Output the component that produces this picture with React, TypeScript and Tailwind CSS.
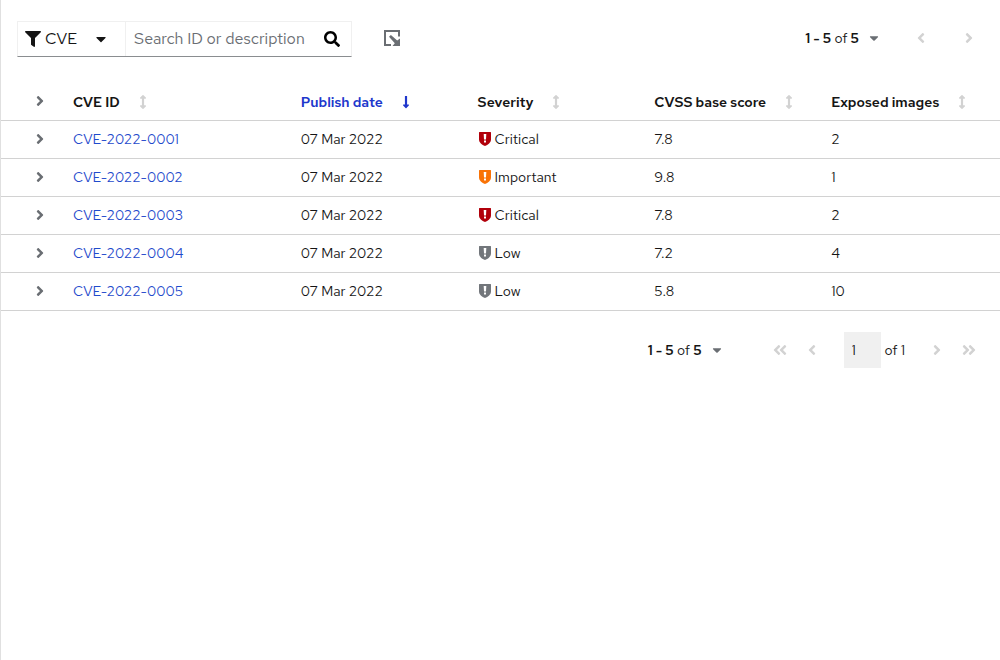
import type { ReactNode } from "react";
import {
  FaAngleDoubleLeft,
  FaAngleDoubleRight,
  FaAngleLeft,
  FaAngleRight,
  FaArrowsAltV,
  FaCaretDown,
  FaFilter,
  FaLongArrowAltDown,
  FaSearch,
} from "react-icons/fa";

type Severity = "Critical" | "Important" | "Low";

const rows: { id: string; date: string; severity: Severity; score: string; images: number }[] = [
  { id: "CVE-2022-0001", date: "07 Mar 2022", severity: "Critical", score: "7.8", images: 2 },
  { id: "CVE-2022-0002", date: "07 Mar 2022", severity: "Important", score: "9.8", images: 1 },
  { id: "CVE-2022-0003", date: "07 Mar 2022", severity: "Critical", score: "7.8", images: 2 },
  { id: "CVE-2022-0004", date: "07 Mar 2022", severity: "Low", score: "7.2", images: 4 },
  { id: "CVE-2022-0005", date: "07 Mar 2022", severity: "Low", score: "5.8", images: 10 },
];

const severityColor: Record<Severity, string> = {
  Critical: "text-[#b1000b]",
  Important: "text-[#f97306]",
  Low: "text-[#72767b]",
};

function ShieldIcon({ className }: { className: string }) {
  return (
    <svg viewBox="0 0 12 14" className={`h-[14px] w-3 ${className}`} fill="currentColor" aria-hidden="true">
      <path
        fillRule="evenodd"
        d="M0 .4Q0 0 .4 0h11.200Q12 0 12 .4V7.500C12 10.500 9 13 6 14 3 13 0 10.500 0 7.500ZM4.700 2l.3 5.500h2L7.300 2ZM5 8.500v2h2v-2Z"
      />
    </svg>
  );
}

function ExportIcon() {
  return (
    <svg viewBox="0 0 16 16" className="size-4" fill="currentColor" aria-hidden="true">
      <path d="M0 0h16v6.500h-2V2H2v12h5v2H0Z" />
      <path d="M5 6.800 6.900 5 13.200 10.600 16 8.500V16H8.500l2.300-2.800Z" />
    </svg>
  );
}

function Header({ label, sorted = false }: { label: string; sorted?: boolean }) {
  return (
    <th scope="col" aria-sort={sorted ? "descending" : "none"} className="px-2 pt-0.5 text-left font-semibold">
      <button
        type="button"
        className={`flex items-center gap-4 whitespace-nowrap ${sorted ? "text-[#2037cc]" : "text-[#151515]"}`}
      >
        {label}
        {sorted ? (
          <FaLongArrowAltDown className="size-3.5" />
        ) : (
          <FaArrowsAltV className="size-3.5 text-[#d2d2d2]" />
        )}
      </button>
    </th>
  );
}

function NavButton({ label, children }: { label: string; children: ReactNode }) {
  return (
    <button type="button" disabled aria-label={label} className="flex w-8 justify-center text-[#d2d2d2]">
      {children}
    </button>
  );
}

function PageRange() {
  return (
    <button type="button" className="flex items-center gap-2 text-sm">
      <span>
        <b className="font-semibold">1 - 5</b> of <b className="font-semibold">5</b>
      </span>
      <FaCaretDown className="size-3.5 text-[#6a6e73]" />
    </button>
  );
}

export default function App() {
  return (
    <main className="min-h-screen border-l border-[#e0e0e0] bg-white font-['Red_Hat_Text','Lato',sans-serif] text-[#151515]">
      <div className="flex items-center pt-[21px] pr-[15px] pl-4">
        <div className="flex h-9 border border-[#f0f0f0] border-b-[#8a8d90]">
          <button type="button" className="flex w-[108px] items-center border-r border-[#f0f0f0] pl-[7px]">
            <FaFilter className="size-4" />
            <span className="ml-1">CVE</span>
            <FaCaretDown className="ml-4 size-4" />
          </button>
          <input
            type="text"
            aria-label="Search ID or description"
            placeholder="Search ID or description"
            className="w-[187px] pl-2 text-base outline-none placeholder:text-[#6a6e73]"
          />
          <button type="button" aria-label="Search" className="flex w-[38px] items-center justify-center text-black">
            <FaSearch className="size-4" />
          </button>
        </div>
        <button type="button" aria-label="Export" className="ml-8 pb-0.5 text-[#6a6e73]">
          <ExportIcon />
        </button>
        <div className="ml-auto flex items-center pb-0.5">
          <PageRange />
          <div className="ml-6 flex gap-4">
            <NavButton label="Previous page">
              <FaAngleLeft className="size-4" />
            </NavButton>
            <NavButton label="Next page">
              <FaAngleRight className="size-4" />
            </NavButton>
          </div>
        </div>
      </div>

      <table className="mt-[25px] w-full table-fixed border-collapse text-sm">
        <colgroup>
          <col className="w-16" />
          <col className="w-[22.8%]" />
          <col />
          <col />
          <col />
          <col />
        </colgroup>
        <thead>
          <tr className="h-[38px] border-b border-[#d2d2d2]">
            <td className="pl-[31px]">
              <button type="button" aria-label="Expand all rows" className="flex text-[#6a6e73]">
                <FaAngleRight className="size-4" />
              </button>
            </td>
            <Header label="CVE ID" />
            <Header label="Publish date" sorted />
            <Header label="Severity" />
            <Header label="CVSS base score" />
            <Header label="Exposed images" />
          </tr>
        </thead>
        <tbody>
          {rows.map((row) => (
            <tr key={row.id} className="h-[38px] border-b border-[#d2d2d2]">
              <td className="pl-[31px]">
                <button type="button" aria-label={`Expand ${row.id}`} className="flex text-[#6a6e73]">
                  <FaAngleRight className="size-4" />
                </button>
              </td>
              <td className="px-2">
                <a href={`#${row.id}`} className="text-[#1f4bcc]">
                  {row.id}
                </a>
              </td>
              <td className="px-2">{row.date}</td>
              <td className="px-2">
                <span className="flex items-center gap-1 pl-px">
                  <ShieldIcon className={severityColor[row.severity]} />
                  {row.severity}
                </span>
              </td>
              <td className="px-2">{row.score}</td>
              <td className="px-2">{row.images}</td>
            </tr>
          ))}
        </tbody>
      </table>

      <nav aria-label="Pagination" className="mt-[21px] flex items-center justify-end pr-[15px] text-sm">
        <PageRange />
        <div className="ml-10 flex">
          <NavButton label="First page">
            <FaAngleDoubleLeft className="size-4" />
          </NavButton>
          <NavButton label="Previous page">
            <FaAngleLeft className="size-4" />
          </NavButton>
        </div>
        <label className="ml-4 flex items-center gap-1">
          <input
            type="text"
            aria-label="Current page"
            defaultValue="1"
            disabled
            className="h-9 w-[37px] bg-[#f0f0f0] pl-2 text-[#151515]"
          />
          of 1
        </label>
        <div className="ml-4 flex">
          <NavButton label="Next page">
            <FaAngleRight className="size-4" />
          </NavButton>
          <NavButton label="Last page">
            <FaAngleDoubleRight className="size-4" />
          </NavButton>
        </div>
      </nav>
    </main>
  );
}
